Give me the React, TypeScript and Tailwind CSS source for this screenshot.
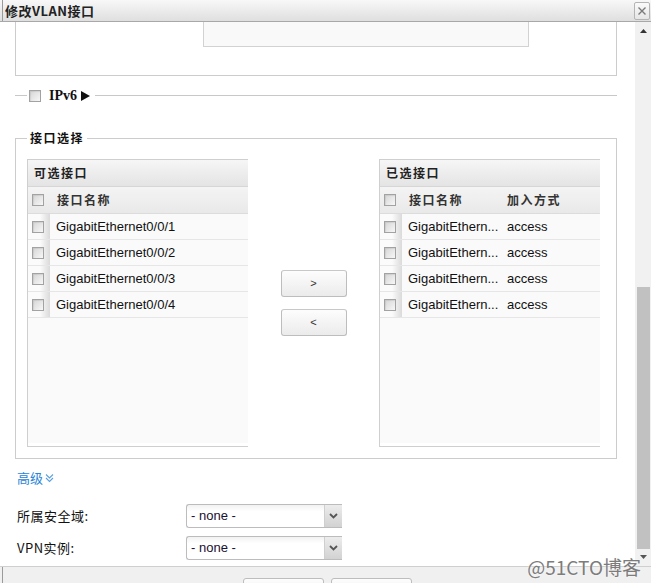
const cjk = "font-['Noto_Sans_CJK_SC',sans-serif]";
const latin = "font-['Liberation_Sans','Noto_Sans_CJK_SC',sans-serif]";

const Check = () => (
  <span className="block h-[12px] w-[12px] shrink-0 border border-[#a2a2a2] bg-gradient-to-br from-[#d6d6d6] to-[#f7f7f7] shadow-[inset_1px_1px_1px_rgba(0,0,0,0.08)]" />
);

const leftRows = ["GigabitEthernet0/0/1", "GigabitEthernet0/0/2", "GigabitEthernet0/0/3", "GigabitEthernet0/0/4"];

const Panel = ({ title, selected }: { title: string; selected?: boolean }) => (
  <div className="flex h-[288px] w-[221px] shrink-0 flex-col overflow-hidden border-y border-l border-[#cfcfcf] bg-white">
    <div className={`flex h-[27px] shrink-0 items-center border-b border-[#d6d6d6] bg-gradient-to-b from-[#f6f6f6] to-[#e4e4e4] pl-[6px] text-[12px] font-bold tracking-[1.5px] text-[#222] ${cjk}`}>
      {title}
    </div>
    <div className={`flex h-[27px] shrink-0 items-center border-b border-[#dcdcdc] bg-gradient-to-b from-[#f4f4f4] to-[#e9e9e9] pl-[4px] text-[12px] font-bold tracking-[1.5px] text-[#333] ${cjk}`}>
      <Check />
      <span className="ml-[13px] w-[98px]">接口名称</span>
      {selected && <span>加入方式</span>}
    </div>
    <div className="flex flex-1 flex-col bg-[#fafafa]">
      {leftRows.map((r) => (
        <div key={r} className={`flex h-[26px] shrink-0 items-center border-b border-[#e6e6e6] text-[13px] text-[#111] ${latin}`}>
          <div className="flex h-full w-[22px] shrink-0 items-center bg-gradient-to-r from-[#fbfbfb] from-55% to-[#dadada] pl-[4px]">
            <Check />
          </div>
          {selected ? (
            <>
              <span className="ml-[6px] w-[99px]">GigabitEthern...</span>
              <span>access</span>
            </>
          ) : (
            <span className="ml-[6px]">{r}</span>
          )}
        </div>
      ))}
    </div>
    <div className="h-[3px] shrink-0 bg-white" />
  </div>
);

const MoveButton = ({ label }: { label: string }) => (
  <button className={`flex h-[27px] w-[66px] items-center justify-center rounded-[3px] border border-[#bdbdbd] border-t-[#c8c8c8] border-t-dashed bg-gradient-to-b from-[#fdfdfd] to-[#ebebeb] text-[11px] text-[#333] ${latin}`}>
    {label}
  </button>
);

const SelectBox = () => (
  <div className={`flex h-[24px] w-[156px] items-stretch overflow-hidden rounded-l-[3px] border-y border-l border-[#bcbcbc] bg-gradient-to-b from-[#f2f2f2] from-0% via-white via-30% to-white ${latin}`}>
    <div className="flex flex-1 items-center pl-[4px] text-[13px] text-[#1a1030]">- none -</div>
    <div className="flex w-[18px] items-center justify-center border-l border-[#cfcfcf] bg-gradient-to-b from-[#ececec] to-[#d2d2d2]">
      <svg width="9" height="6" viewBox="0 0 9 6">
        <path d="M1 1 L4.5 4.5 L8 1" fill="none" stroke="#555" strokeWidth="1.8" />
      </svg>
    </div>
  </div>
);

export default function App() {
  return (
    <div className="relative flex h-[583px] w-[651px] flex-col overflow-hidden bg-white">
      <div className="flex h-[22px] shrink-0 items-center justify-between border-b border-[#a8a8a8] bg-gradient-to-b from-[#f8f8f8] to-[#dfdfdf]">
        <div className="flex h-full items-center">
          <span className="ml-[2px] h-full w-px bg-[#9a9a9a]" />
          <span className={`ml-[2px] text-[13px] font-bold tracking-[0.5px] text-[#222] ${cjk}`}>修改VLAN接口</span>
        </div>
        <div className="mr-px flex h-[18px] w-[16px] items-center justify-center rounded-[2px] border border-[#b4b4b4] bg-gradient-to-b from-[#fafafa] to-[#e6e6e6]">
          <svg width="10" height="10" viewBox="0 0 10 10">
            <path d="M1.5 1.5 L8.5 8.5 M8.5 1.5 L1.5 8.5" stroke="#7a7a7a" strokeWidth="1.4" />
          </svg>
        </div>
      </div>

      <div className="flex h-[544px] shrink-0">
        <div className="flex w-[635px] flex-col overflow-hidden pl-[15px]">
          <div className="h-[54px] w-[602px] shrink-0 border-x border-b border-[#cccccc]">
            <div className="ml-[187px] h-[25px] w-[326px] border-x border-b border-[#d2d2d2] bg-[#f9f9f9]" />
          </div>

          <div className="mt-[13px] flex h-[13px] w-[602px] shrink-0 items-center">
            <span className="h-px w-[12px] bg-[#c8c8c8]" />
            <span className="ml-[2px]">
              <Check />
            </span>
            <span className="ml-[8px] font-['Liberation_Serif',serif] text-[14px] font-bold text-[#111]">IPv6</span>
            <svg className="ml-[4px]" width="9" height="10" viewBox="0 0 9 10">
              <path d="M0 0 L9 5 L0 10 Z" fill="#111" />
            </svg>
            <span className="ml-[5px] h-px flex-1 bg-[#c8c8c8]" />
          </div>

          <fieldset className="mt-[29px] w-[602px] shrink-0 border border-[#cccccc] pb-[11px] pl-[11px] pr-[16px] pt-[14px]">
            <legend className={`px-[3px] text-[12px] leading-[14px] font-bold tracking-[1.5px] text-[#111] ${cjk}`}>接口选择</legend>
            <div className="flex">
              <Panel title="可选接口" />
              <div className="flex flex-1 flex-col items-center gap-[12px] pt-[111px]">
                <MoveButton label=">" />
                <MoveButton label="<" />
              </div>
              <Panel title="已选接口" selected />
            </div>
          </fieldset>

          <div className={`mt-[11px] flex items-center pl-[2px] text-[13px] leading-[16px] text-[#2a85d6] ${cjk}`}>
            高级
            <svg className="ml-[2px]" width="9" height="10" viewBox="0 0 9 10">
              <path d="M1 1.5 L4.5 5 L8 1.5 M1 5 L4.5 8.5 L8 5" fill="none" stroke="#5aa0e0" strokeWidth="1.1" />
            </svg>
          </div>

          <div className="mt-[18px] flex flex-col gap-[8px] pl-[2px]">
            <div className="flex items-center">
              <span className={`w-[169px] text-[13px] tracking-[0.5px] text-[#111] ${cjk}`}>所属安全域:</span>
              <SelectBox />
            </div>
            <div className="flex items-center">
              <span className={`w-[169px] text-[13px] tracking-[0.5px] text-[#111] ${cjk}`}>VPN实例:</span>
              <SelectBox />
            </div>
          </div>
        </div>

        <div className="flex w-[16px] flex-col items-center bg-[#f1f1f1]">
          <svg className="mt-[7px]" width="7" height="4" viewBox="0 0 7 4">
            <path d="M0 4 L3.5 0 L7 4 Z" fill="#333" />
          </svg>
          <div className="mt-[254px] h-[262px] w-[13px] bg-[#c1c1c1]" />
          <svg className="mt-[6px]" width="7" height="4" viewBox="0 0 7 4">
            <path d="M0 0 L3.5 4 L7 0 Z" fill="#555" />
          </svg>
        </div>
      </div>

      <div className="flex flex-1 border-t border-[#cfcfcf] bg-[#f0f0f0]">
        <span className="ml-[2px] h-full w-px bg-[#9a9a9a]" />
        <div className="ml-[240px] mt-[11px] flex gap-[7px]">
          <span className="block h-[22px] w-[81px] rounded-[3px] border border-[#bdbdbd] border-t-dashed bg-gradient-to-b from-[#fdfdfd] to-[#ebebeb]" />
          <span className="block h-[22px] w-[81px] rounded-[3px] border border-[#bdbdbd] border-t-dashed bg-gradient-to-b from-[#fdfdfd] to-[#ebebeb]" />
        </div>
      </div>

      <div className={`absolute bottom-[7px] right-[10px] text-[19px] leading-none text-[#7c7c7c] [text-shadow:0_0_2px_#fff] ${cjk}`}>@51CTO博客</div>
    </div>
  );
}
